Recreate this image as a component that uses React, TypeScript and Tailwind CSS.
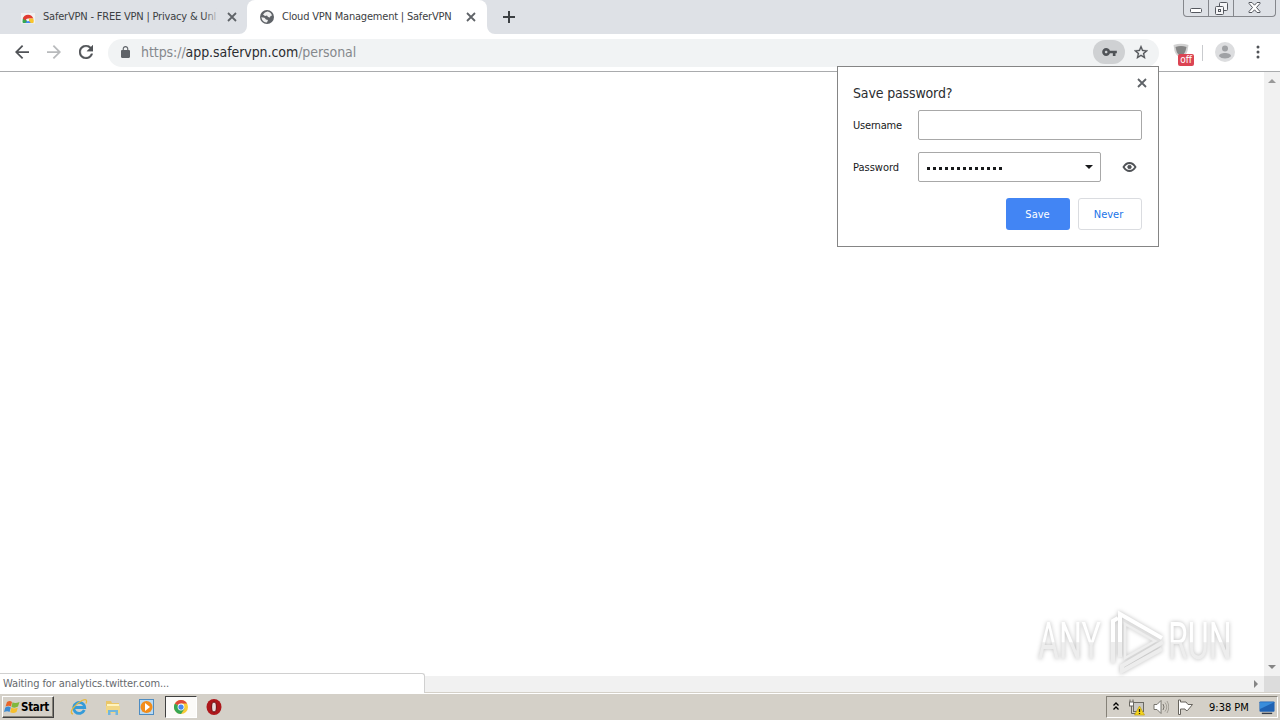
import type { ReactNode } from "react";

type TabProps = {
  title: string;
  icon: ReactNode;
};

function CloseIcon({ className }: { className?: string }) {
  return (
    <svg viewBox="0 0 10 10" className={className} fill="none" stroke="#5f6368" strokeWidth="1.800">
      <path d="M1 1l8 8M9 1l-8 8" />
    </svg>
  );
}

function StoreIcon() {
  return (
    <svg viewBox="0 0 16 16" className="h-4 w-4">
      <path d="M5 3.500V2h6v1.500" fill="none" stroke="#e8e8e8" />
      <path d="M1 4h14v10.500H1z" fill="#f1f1f1" />
      <path d="M2.500 13a5.500 5.500 0 0 1 1.500-5L7 12v2H3z" fill="#36a852" />
      <path d="M2.800 9.500a5.500 5.500 0 0 1 10.500 0H8a3 3 0 0 0-2.500 2z" fill="#e23b31" />
      <path d="M9 9.500h4.300a6 6 0 0 1 0 4.500H9z" fill="#f9c52d" />
      <path d="M5.500 14a2.700 2.700 0 0 1 5.200 0z" fill="#4285f4" />
    </svg>
  );
}

function GlobeIcon() {
  return (
    <svg viewBox="0 0 14 14" className="h-[14px] w-[14px]">
      <circle cx="7" cy="7" r="7" fill="#5f6368" />
      <path d="M7.500 1.500Q4.500 2 3 4.500l2 1.500 2-.5 1 1.500 2 .5.500-1.500 1.500-.5Q11 2 7.500 1.500z" fill="#fff" fillOpacity=".9" />
      <path d="M1.300 7.200l3.200.5L6 9.500l2 .5-1 2.500Q2.500 12.500 1.300 7.200z" fill="#fff" fillOpacity=".9" />
    </svg>
  );
}

function Tab({ title, icon }: TabProps) {
  return (
    <>
      <span className="flex w-4 shrink-0 justify-center">{icon}</span>
      <span className="ml-[7px] w-[176px] pt-px text-[11px] tracking-[-0.2px] whitespace-nowrap text-[#3c4043]">
        {title}
      </span>
      <CloseIcon className="ml-[8px] h-[10px] w-[10px] shrink-0" />
    </>
  );
}

function TabStrip() {
  return (
    <div className="flex h-[34px] bg-[#dee1e6]">
      <div className="relative flex h-[34px] w-[247px] items-center pl-5">
        <Tab title="SaferVPN - FREE VPN | Privacy & Unl" icon={<StoreIcon />} />
        <span className="absolute left-[204px] h-5 w-[16px] bg-gradient-to-r from-transparent to-[#dee1e6]" />
      </div>
      <div className="relative flex h-[34px] w-[240px] items-center rounded-t-lg bg-white pl-3">
        <Tab title="Cloud VPN Management | SaferVPN" icon={<GlobeIcon />} />
        <svg viewBox="0 0 8 8" className="absolute bottom-0 -left-2 h-2 w-2" fill="#fff">
          <path d="M8 0v8H0a8 8 0 0 0 8-8z" />
        </svg>
        <svg viewBox="0 0 8 8" className="absolute -right-2 bottom-0 h-2 w-2" fill="#fff">
          <path d="M0 0v8h8a8 8 0 0 1-8-8z" />
        </svg>
      </div>
      <svg viewBox="0 0 12 12" className="mt-[11px] ml-[16px] h-3 w-3" stroke="#3c4043" strokeWidth="2">
        <path d="M6 0v12M0 6h12" />
      </svg>
      <WindowButtons />
    </div>
  );
}

function WindowButtons() {
  return (
    <div className="mr-[4px] ml-auto flex h-[17px] w-[93px] rounded-b-[4px] border border-t-0 border-[#85878c]">
      <div className="flex w-[25px] justify-center border-r border-[#85878c]">
        <svg viewBox="0 0 12 5" className="mt-[8px] h-[5px] w-3">
          <rect x=".5" y=".5" width="11" height="4" rx="1" fill="#fff" stroke="#55585f" />
        </svg>
      </div>
      <div className="flex w-[25px] justify-center border-r border-[#85878c]">
        <svg viewBox="0 0 13 13" className="mt-[2px] h-[13px] w-[13px]" fill="#f5f5f7" stroke="#55585f">
          <rect x="4.500" y=".5" width="8" height="8" rx="1" />
          <rect x=".5" y="4.500" width="8" height="8" rx="1" />
          <rect x="3.500" y="7.500" width="2" height="2" />
        </svg>
      </div>
      <div className="flex flex-1 justify-center">
        <svg viewBox="0 0 13 11" className="mt-[2px] h-[11px] w-[13px]" fill="#fff" stroke="#55585f">
          <path d="M1 .5h3l2.500 2.700L9 .5h3v1L8.500 5.500l3.500 4v1H9L6.500 7.800 4 10.500H1v-1l3.500-4L1 1.500z" />
        </svg>
      </div>
    </div>
  );
}

function Toolbar() {
  return (
    <div className="flex h-[38px] items-center border-b border-[#a9abad] bg-white pl-[15px]">
      <svg viewBox="4 4 16 16" className="h-[14px] w-[14px] -translate-y-px" fill="#505357">
        <path d="M20 11H7.830l5.590-5.590L12 4l-8 8 8 8 1.410-1.410L7.830 13H20v-2z" />
      </svg>
      <svg viewBox="4 4 16 16" className="ml-[18px] h-[14px] w-[14px] -translate-y-px" fill="#b8babc">
        <path d="M12 4l-1.410 1.410L16.170 11H4v2h12.170l-5.580 5.590L12 20l8-8z" />
      </svg>
      <svg viewBox="4 4 16 16" className="ml-[18px] h-[14px] w-[14px] -translate-y-px" fill="#505357" stroke="#505357" strokeWidth=".4">
        <path d="M17.650 6.350C16.200 4.900 14.210 4 12 4c-4.420 0-7.990 3.580-7.990 8s3.570 8 7.990 8c3.730 0 6.840-2.550 7.730-6h-2.080c-.82 2.330-3.040 4-5.650 4-3.310 0-6-2.690-6-6s2.690-6 6-6c1.660 0 3.140.69 4.220 1.780L13 11h7V4l-2.350 2.350z" />
      </svg>

      {/* Address bar */}
      <div className="ml-[15px] flex h-7 w-[1051px] items-center rounded-full bg-[#f1f3f4] pl-[13px]">
        <svg viewBox="4 1 16 21" preserveAspectRatio="none" className="h-[12px] w-[9px] -translate-y-px" fill="#5f6368">
          <path d="M18 8h-1V6c0-2.760-2.240-5-5-5S7 3.240 7 6v2H6c-1.100 0-2 .9-2 2v10c0 1.100.9 2 2 2h12c1.100 0 2-.9 2-2V10c0-1.100-.9-2-2-2zM9 6c0-1.660 1.340-3 3-3s3 1.340 3 3v2H9V6z" />
        </svg>
        <span className="ml-[11px] text-[14px] tracking-[-0.07px] whitespace-nowrap text-[#85888c]">
          https://<span className="text-[#2b2d30]">app.safervpn.com</span>/personal
        </span>
        <div className="mr-[11px] ml-auto flex items-center gap-[9px]">
          <div className="flex h-6 w-8 -translate-y-px items-center justify-center rounded-full bg-[#cfd1d3]">
            <svg viewBox="1 6 22 12" className="h-[8px] w-[15px]" fill="#505357">
              <path d="M12.650 10C11.830 7.670 9.610 6 7 6c-3.310 0-6 2.690-6 6s2.690 6 6 6c2.610 0 4.830-1.670 5.650-4H17v4h4v-4h2v-4H12.650zM7 14c-1.100 0-2-.9-2-2s.9-2 2-2 2 .9 2 2-.9 2-2 2z" />
            </svg>
          </div>
          <svg viewBox="2 2 20 19" className="h-[14px] w-[14px] -translate-y-px" fill="#505357" stroke="#505357" strokeWidth=".4">
            <path d="M22 9.240l-7.190-.62L12 2 9.190 8.630 2 9.240l5.460 4.730L5.820 21 12 17.270 18.180 21l-1.630-7.030L22 9.240zM12 15.400l-3.760 2.270 1-4.280-3.320-2.880 4.380-.38L12 6.100l1.710 4.040 4.380.38-3.320 2.880 1 4.280L12 15.400z" />
          </svg>
        </div>
      </div>

      {/* Extension */}
      <div className="relative ml-[14px] h-6 w-6">
        <svg viewBox="0 0 16 16" className="mt-[2px] h-4 w-4">
          <path d="M.5 2Q8-.5 15.500 2l-1 6Q13 13 8 15 3 13 1.500 8z" fill="#d2d2d2" />
          <path d="M2.500 4Q8 2 13.500 4l-1 4Q11 12 8 13 4 11 3.500 8z" fill="#858585" />
        </svg>
        <span className="absolute top-[13px] left-[5px] flex h-[12px] w-[16px] items-center justify-center rounded-[2px] bg-[#db4453] text-[10px] text-white">
          off
        </span>
      </div>
      <span className="ml-[5px] h-4 w-px bg-[#c9cbce]" />
      <svg viewBox="0 0 20 20" className="ml-[12px] h-5 w-5 -translate-y-px">
        <circle cx="10" cy="10" r="10" fill="#dcdddf" />
        <circle cx="10" cy="6.500" r="3" fill="#a0a2a5" />
        <path d="M4 14.200c0-2 3-3.200 6-3.200s6 1.200 6 3.200Q14 16.500 10 16.500T4 14.200z" fill="#a0a2a5" />
      </svg>
      <svg viewBox="0 0 4 14" className="ml-[21px] h-[14px] w-1 -translate-y-px" fill="#505357">
        <circle cx="2" cy="2" r="1.500" />
        <circle cx="2" cy="7" r="1.500" />
        <circle cx="2" cy="12" r="1.500" />
      </svg>
    </div>
  );
}

function SavePasswordDialog() {
  return (
    <div className="absolute top-[66px] left-[837px] h-[181px] w-[322px] border border-[#858585] bg-white px-[15px] text-[11px] text-[#18191b]">
      <CloseIcon className="absolute top-[11px] right-[11px] h-[10px] w-[10px]" />
      <h1 className="mt-[16px] text-[14px] leading-5 tracking-[-0.15px] text-[#2b2d30]">Save password?</h1>
      <div className="mt-[7px] flex h-[30px] items-center">
        <label className="w-[65px] pt-[2px] tracking-[-0.2px]">Username</label>
        <div className="h-[30px] w-[224px] rounded-[2px] border border-[#a8a8a8]" />
      </div>
      <div className="mt-3 flex h-[30px] items-center">
        <label className="w-[65px] pt-[2px]">Password</label>
        <div className="flex h-[30px] w-[183px] items-center rounded-[2px] border border-[#a8a8a8] pr-[7px] pl-[8px]">
          <div className="mt-[3px] flex gap-[3px]">
            {Array.from({ length: 13 }, (_, i) => (
              <span key={i} className="h-[3px] w-[3px] bg-[#18191b]" />
            ))}
          </div>
          <svg viewBox="0 0 8 4" className="ml-auto h-1 w-2" fill="#18191b">
            <path d="M0 0h8L4 4z" />
          </svg>
        </div>
        <svg viewBox="0 0 14 10" className="ml-[21px] h-[10px] w-[15px]" fill="none" stroke="#505357">
          <path d="M1 5Q3.500 1 7 1t6 4Q10.500 9 7 9T1 5z" strokeWidth="1.800" />
          <circle cx="7" cy="5" r="1.700" fill="#505357" />
        </svg>
      </div>
      <div className="mt-4 flex gap-2 pl-[153px]">
        <button className="h-8 w-16 rounded-[3px] bg-[#4285f4] pt-[2px] pr-px text-white">Save</button>
        <button className="h-8 w-16 rounded-[3px] border border-[#dadce0] pt-[2px] pr-[3px] text-[#1a73e8]">Never</button>
      </div>
    </div>
  );
}

function WatermarkText({ children }: { children: ReactNode }) {
  return (
    <div className="w-[66px] shrink-0">
      <div className="w-max origin-left scale-x-[0.62] bg-gradient-to-b from-white from-50% to-[#ededed] to-51% bg-clip-text font-['Roboto'] text-[52px] leading-[66px] text-transparent">
        {children}
      </div>
    </div>
  );
}

function Watermark() {
  return (
    <div className="absolute top-[608px] left-[1038px] flex h-[68px] w-[206px] items-center [filter:drop-shadow(0_0_2px_#bcbcbc)]">
      <WatermarkText>ANY</WatermarkText>
      <svg viewBox="0 0 58 66" className="ml-[4px] h-[66px] w-[58px] shrink-0" fill="none" stroke="#fff" strokeWidth="4">
        <path d="M17 15v34l30-17z" stroke="#eee" strokeWidth="2.500" />
        <path d="M12 48V5l42 24" />
        <path d="M5 54V12l5-3" />
        <path d="M55 33L14 57v5l40-22" stroke="#ededed" />
        <path d="M12 33v15M5 33v21" stroke="#ededed" />
      </svg>
      <span className="w-[2px] shrink-0" />
      <WatermarkText>RUN</WatermarkText>
    </div>
  );
}

function Page() {
  return (
    <div className="flex h-[620px] flex-col">
      <div className="flex h-[604px] bg-white">
        <div className="flex-1" />
        <div className="flex w-4 flex-col items-center justify-between bg-[#f1f1f1] pt-[7px] pb-[7px]">
          <svg viewBox="0 0 8 4" className="h-1 w-2" fill="#999">
            <path d="M0 4h8L4 0z" />
          </svg>
          <svg viewBox="0 0 8 4" className="h-1 w-2" fill="#858585">
            <path d="M0 0h8L4 4z" />
          </svg>
        </div>
      </div>
      <div className="flex h-4 items-center bg-[#f1f1f1]">
        <svg viewBox="0 0 4 8" className="mr-[6px] ml-auto h-2 w-1" fill="#858585">
          <path d="M0 0l4 4-4 4z" />
        </svg>
        <span className="h-4 w-4 bg-[#dcdcdc]" />
      </div>
    </div>
  );
}

function StartButton() {
  return (
    <button className="flex h-[22px] w-[52px] items-center border border-t-white border-r-[#404040] border-b-[#404040] border-l-white pl-px shadow-[inset_-1px_-1px_#858178]">
      <svg viewBox="0 0 16 16" className="h-4 w-4 shrink-0">
        <path d="M3 3q3-2 5 0L7 7.500Q5 6 1.500 7.500z" fill="#e8652a" />
        <path d="M8.500 3.300Q11 5 15.500 3L14 7.500q-3 2-6.500.5z" fill="#80b83c" />
        <path d="M1.300 8.500q3-2 5.500 0L5.500 13Q3.500 11.500 0 13z" fill="#3c8bd3" />
        <path d="M7.300 8.800q3 1.500 6.500 0L12.500 13q-3 2-6.300.3z" fill="#f6bf2d" />
      </svg>
      <span className="pt-px pl-px text-[11.500px] font-bold tracking-[-0.3px] text-black">Start</span>
    </button>
  );
}

function QuickLaunch() {
  return (
    <div className="flex items-center">
      <svg viewBox="0 0 18 18" className="ml-[16px] h-[18px] w-[18px]" fill="none">
        <path d="M14.300 12a5.500 5.500 0 1 1 .4-2.500H5" stroke="#349bd9" strokeWidth="2.800" />
        <path d="M3 16C-2 15 5 6 12 2.500c5-2.500 5 .5 4 3" stroke="#e5b93f" strokeWidth="1.300" />
      </svg>
      <svg viewBox="0 0 18 18" className="ml-[16px] h-[18px] w-[18px]">
        <path d="M2 3h5l1 2h7v10H2z" fill="#eac668" />
        <path d="M3 6h12v3H3z" fill="#fff4bd" />
        <path d="M2 8h14v7H2z" fill="#f2d784" />
        <path d="M4 17v-5h10v5h-2.500v-3h-5v3z" fill="#71b6dd" />
      </svg>
      <svg viewBox="0 0 18 18" className="ml-[16px] h-[18px] w-[18px]">
        <rect x="1.500" y="1.500" width="14" height="15" fill="#b9daf3" stroke="#4d8cc2" />
        <circle cx="8.500" cy="9" r="6" fill="#f28d1b" />
        <path d="M7 5l5 4-5 4z" fill="#fff" />
      </svg>
      <div className="ml-[9px] flex h-[22px] w-[32px] items-center justify-center border border-t-[#404040] border-r-white border-b-white border-l-[#404040] bg-[#fbfaf8]">
        <svg viewBox="0 0 16 16" className="h-[14px] w-[14px]">
          <circle cx="8" cy="8" r="8" fill="#f8cb37" />
          <path d="M8 8L1.070 4A8 8 0 0 0 8 16l4-6z" fill="#37a653" />
          <path d="M8 8L1.070 4A8 8 0 0 1 14.930 4H8z" fill="#de4939" />
          <circle cx="8" cy="8" r="3.900" fill="#fff" />
          <circle cx="8" cy="8" r="3" fill="#4787ee" />
        </svg>
      </div>
      <svg viewBox="0 0 16 16" className="ml-[9px] h-4 w-4">
        <ellipse cx="8" cy="8" rx="7.500" ry="8" fill="#ad171b" />
        <ellipse cx="8" cy="8" rx="2.400" ry="5" fill="#e7dddd" stroke="#690d10" />
      </svg>
    </div>
  );
}

function Tray() {
  return (
    <div className="mr-[2px] ml-auto flex h-[22px] w-[172px] items-center border border-t-[#858178] border-r-white border-b-white border-l-[#858178]">
      <svg viewBox="0 0 6 9" className="ml-[6px] h-[9px] w-[6px] -translate-y-px" fill="none" stroke="#000" strokeWidth="1.300">
        <path d="M.5 3.500L3 1l2.500 2.500M.5 7.500L3 5l2.500 2.500" />
      </svg>
      <svg viewBox="0 0 17 17" className="ml-[9px] h-[17px] w-[17px]">
        <rect x="5.500" y="3.500" width="10" height="9" fill="#c9c8c4" stroke="#6b6963" />
        <rect x="1.500" y="3" width="4" height="4" fill="#fff" stroke="#6b6963" />
        <path d="M2 .5V3M5 .5V3M3.500 7v7.500H9" fill="none" stroke="#6b6963" />
        <path d="M11.500 7l5 9h-10z" fill="#f5d51b" stroke="#bd9d18" strokeWidth=".7" />
        <path d="M11.500 10v3M11.500 14v1" stroke="#222" strokeWidth="1.300" />
      </svg>
      <svg viewBox="0 0 16 16" className="ml-[8px] h-4 w-4" fill="none" stroke="#77746d">
        <path d="M1 5.500h3l4-4v13l-4-4H1z" fill="#fff" />
        <path d="M10 5q2 3 0 6" />
        <path d="M12 3.500q3.500 4.500 0 9M14 2q3.500 6 0 12" stroke="#a39f96" />
      </svg>
      <svg viewBox="0 0 16 16" className="ml-[8px] h-4 w-4" fill="#fff" stroke="#66635c">
        <path d="M1.500 1v14.500h2V10h4.500l1 1.500h1.500l5-6H11L9 3H3.500V1z" />
      </svg>
      <span className="ml-[16px] pt-[2px] text-[11px] whitespace-nowrap text-black">9:38 PM</span>
      <svg viewBox="0 0 17 15" className="mr-[2px] ml-auto h-[15px] w-[16px]">
        <rect x=".5" y="1" width="16" height="11" rx="1" fill="#1f62b3" />
        <path d="M1 2h15L1 9z" fill="#398ddb" />
        <path d="M3 13h11v1.500H3z" fill="#343b48" />
      </svg>
    </div>
  );
}

export default function App() {
  return (
    <div className="relative h-[720px] w-[1280px] overflow-hidden bg-white font-['DejaVu_Sans_Condensed','DejaVu_Sans',sans-serif]">
      <TabStrip />
      <Toolbar />
      <Page />

      {/* Taskbar */}
      <div className="flex h-7 border-t border-[#d4d0c8] bg-[#d4d0c8]">
        <div className="flex w-full items-center border-t border-white pl-[2px]">
          <StartButton />
          <QuickLaunch />
          <Tray />
        </div>
      </div>

      <div className="absolute top-[673px] left-0 flex h-[20px] w-[425px] items-center rounded-tr-[3px] border-t border-r border-[#d0d0d0] bg-white pt-px pl-[3px] text-[11px] tracking-[-0.1px] text-[#66696d]">
        Waiting for analytics.twitter.com...
      </div>
      <Watermark />
      <SavePasswordDialog />
    </div>
  );
}
